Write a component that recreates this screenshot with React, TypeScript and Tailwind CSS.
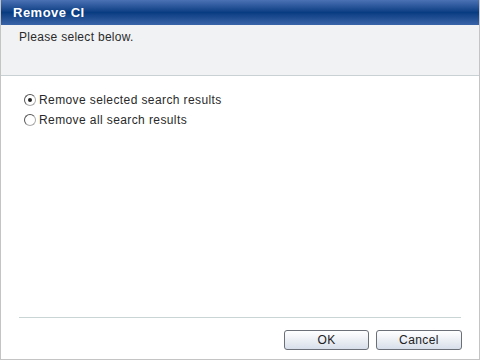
export default function App() {
  return (
    <div
      className="w-[480px] h-[360px] bg-white border border-t-0 border-[#c4c4c4] flex flex-col text-[12px] text-[#2a2a2a]"
      style={{ fontFamily: '"Liberation Sans", "Noto Sans CJK JP", sans-serif' }}
    >
      <div className="h-[25px] shrink-0 bg-gradient-to-b from-[#4a72b4] via-[#083c82] to-[#3a64a8] flex items-center px-[12px]">
        <span className="text-white font-bold text-[13px] tracking-[0.5px]">Remove CI</span>
      </div>
      <div className="h-[51px] shrink-0 bg-[#f1f2f4] border-b border-[#c9d1d5] px-[18px] pt-[3px]">
        <p className="tracking-[0.3px]">Please select below.</p>
      </div>
      <div className="flex-1 flex flex-col px-[23px] pt-[16px] gap-[5px]">
        <label className="flex items-center gap-[3px] h-[15px] tracking-[0.4px]">
          <span className="w-[12px] h-[12px] rounded-full border border-t-[#555] border-l-[#555] border-r-[#aaa] border-b-[#aaa] bg-white flex items-center justify-center">
            <span className="w-[4px] h-[4px] rounded-full bg-[#222]" />
          </span>
          Remove selected search results
        </label>
        <label className="flex items-center gap-[3px] h-[15px] tracking-[0.4px]">
          <span className="w-[12px] h-[12px] rounded-full border border-t-[#555] border-l-[#555] border-r-[#aaa] border-b-[#aaa] bg-white" />
          Remove all search results
        </label>
      </div>
      <div className="mx-[18px] border-t border-[#c9d5d5]" />
      <div className="h-[41px] shrink-0 flex justify-end items-start gap-[7px] pt-[12px] pr-[17px]">
        <button className="w-[85px] h-[20px] rounded-[3px] border border-[#6a6f78] bg-gradient-to-b from-white to-[#d8dfea] text-[#222] tracking-[0.4px]">
          OK
        </button>
        <button className="w-[86px] h-[20px] rounded-[3px] border border-[#6a6f78] bg-gradient-to-b from-white to-[#d8dfea] text-[#222] tracking-[0.4px]">
          Cancel
        </button>
      </div>
    </div>
  );
}
